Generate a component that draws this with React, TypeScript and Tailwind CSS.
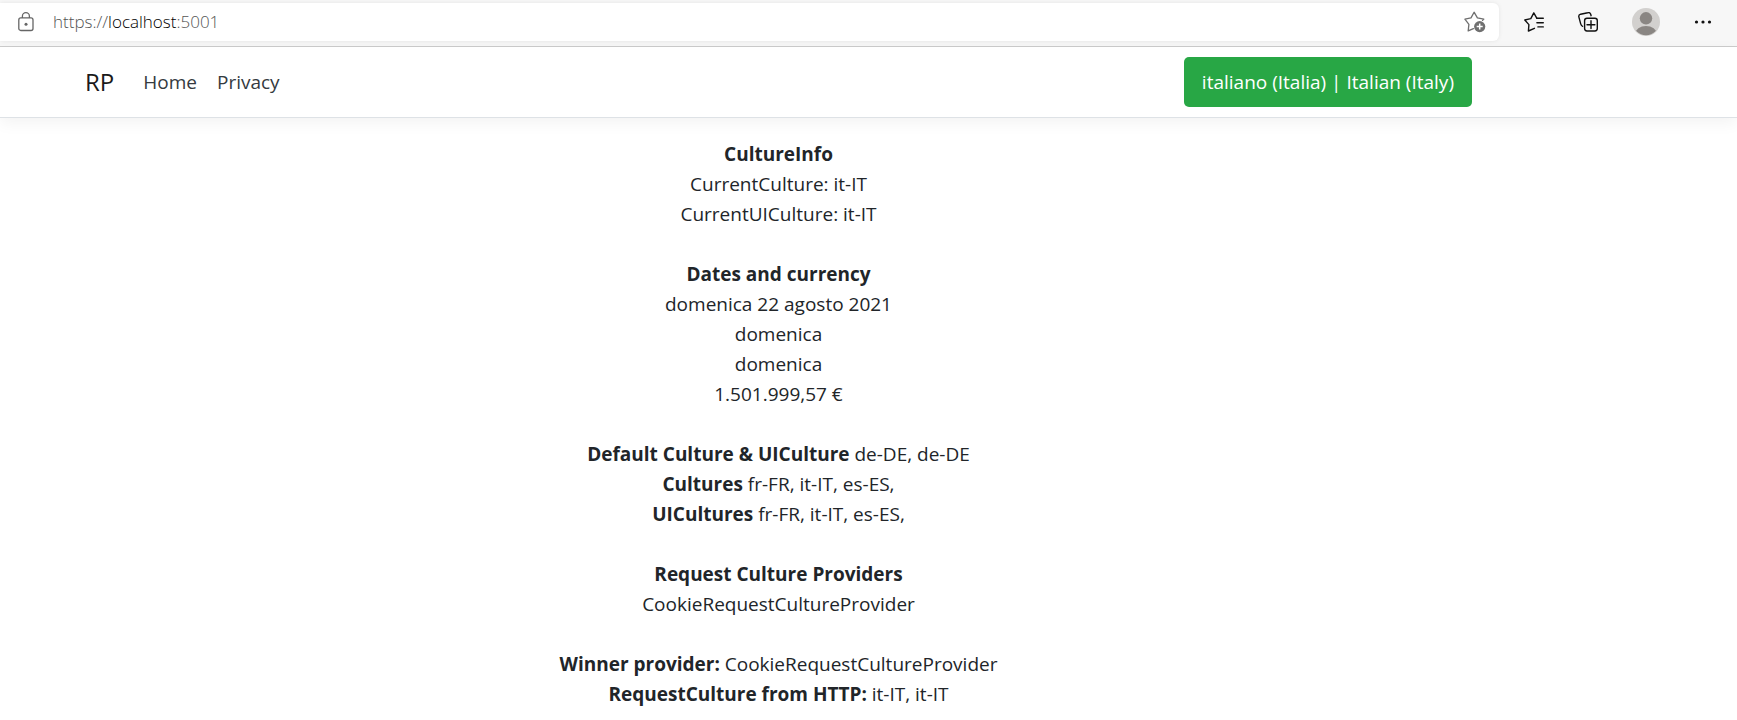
import React from "react";

function LockIcon() {
  return (
    <svg width="16" height="20" viewBox="0 0 16 20" fill="none" stroke="#666" strokeWidth="1.3" aria-hidden="true">
      <rect x="0.8" y="5.9" width="14.2" height="12.6" rx="2" />
      <path d="M4.4 5.9V4.2a3.5 3.5 0 0 1 7 0v1.7" />
      <circle cx="8" cy="12.2" r="1.5" fill="#666" stroke="none" />
    </svg>
  );
}

function AddFavoriteIcon() {
  return (
    <svg width="22" height="22" viewBox="0 0 22 22" fill="none" aria-hidden="true">
      <path
        d="M9.4 17.6 4.2 19.9 4.9 13.4 0.9 8.2 7 6.9 10.1 1.2 13.4 6.9 19.8 8.1 18.6 9.4"
        stroke="#6f6f6f"
        strokeWidth="1.3"
        strokeLinejoin="round"
        strokeLinecap="round"
      />
      <circle cx="15.7" cy="15.6" r="5.6" fill="#707070" />
      <path d="M15.7 12.6v6M12.7 15.6h6" stroke="#fff" strokeWidth="1.5" />
    </svg>
  );
}

function FavoritesIcon() {
  return (
    <svg width="20" height="20" viewBox="0 0 20 20" fill="none" stroke="#111" strokeWidth="1.4" strokeLinejoin="round" strokeLinecap="round" aria-hidden="true">
      <path d="M12.9 6.3 9.8 0.9 6.8 6.6 0.8 8 4.9 12.6 4.4 19 10.4 16.3" />
      <path d="M12.9 6.3H19.3M12.9 10.7h6.4M13.9 14.9h5.4" />
    </svg>
  );
}

function CollectionsIcon() {
  return (
    <svg width="20" height="20" viewBox="0 0 20 20" fill="none" stroke="#111" strokeWidth="1.4" strokeLinejoin="round" strokeLinecap="round" aria-hidden="true">
      <path d="M4.6 14.3C3.5 13.9 3 13 2.7 11.9L0.9 5.1c-.4-1.5.3-2.5 1.7-2.9L9.7 0.7c1.5-.4 2.5.2 3 1.6l.4 1.4" />
      <rect x="6.6" y="6.3" width="12.7" height="12.7" rx="2.4" />
      <path d="M13 8.7v7.9M9 12.7h7.9" />
    </svg>
  );
}

function AvatarIcon() {
  return (
    <svg width="28" height="28" viewBox="0 0 28 28" aria-hidden="true">
      <defs>
        <clipPath id="avatar-clip">
          <circle cx="14" cy="14" r="13.2" />
        </clipPath>
      </defs>
      <circle cx="14" cy="14" r="14" fill="#d2d0ce" />
      <circle cx="14" cy="10.3" r="6.2" fill="#8a8683" />
      <ellipse cx="14" cy="26" rx="10.8" ry="8" fill="#8a8683" clipPath="url(#avatar-clip)" />
    </svg>
  );
}

function MoreIcon() {
  return (
    <svg width="18" height="18" viewBox="0 0 18 18" fill="#111" aria-hidden="true">
      <circle cx="2.5" cy="9" r="1.6" />
      <circle cx="9" cy="9" r="1.6" />
      <circle cx="15.5" cy="9" r="1.6" />
    </svg>
  );
}

function BrowserBar() {
  return (
    <div className="flex h-[47px] items-start border-b border-[#cccccc] bg-[#f7f7f7] pt-[3px]">
      <div className="flex h-[38px] flex-1 items-center rounded-r-md bg-white pr-[13px] pl-[18px] shadow-[0_0_4px_rgba(0,0,0,0.08)]">
        <LockIcon />
        <a href="https://localhost:5001" className="ml-[19px] flex-1 text-[17px] font-light text-[#555555]">
          https://<span className="text-black">localhost</span>:5001
        </a>
        <button type="button" aria-label="Add this page to favorites">
          <AddFavoriteIcon />
        </button>
      </div>
      <div className="flex h-[38px] items-center gap-[34px] px-[25px]">
        <button type="button" aria-label="Favorites">
          <FavoritesIcon />
        </button>
        <button type="button" aria-label="Collections">
          <CollectionsIcon />
        </button>
        <button type="button" aria-label="Profile">
          <AvatarIcon />
        </button>
        <button type="button" aria-label="Settings and more">
          <MoreIcon />
        </button>
      </div>
    </div>
  );
}

function SiteHeader() {
  return (
    <header className="border-b border-[#dee2e6] shadow-[0_5px_15px_rgba(0,0,0,0.05)]">
      <nav className="ml-[66px] flex w-full max-w-[1425px] items-center px-[19px] py-2.5 text-[19px]">
        <a href="#" className="text-[24px] text-[#1a1a1a]">
          RP
        </a>
        <a href="#" className="ml-[29px] text-[#343a40]">
          Home
        </a>
        <a href="#privacy" className="ml-5 text-[#343a40]">
          Privacy
        </a>
        <button type="button" className="ml-auto h-[50px] rounded-[5px] bg-[#28a745] px-[18px] text-white">
          italiano (Italia) | Italian (Italy)
        </button>
      </nav>
    </header>
  );
}

function Heading({ children }: { children: React.ReactNode }) {
  return <strong className="font-bold">{children}</strong>;
}

export default function App() {
  return (
    <div className="min-h-screen bg-white font-['Open_Sans','Noto_Sans',sans-serif] text-[#212529]">
      <BrowserBar />
      <SiteHeader />
      <main className="ml-[66px] flex w-full max-w-[1425px] flex-col gap-[30px] px-[19px] pt-[21px] text-center text-[19px] leading-[30px]">
        <section>
          <p>
            <Heading>CultureInfo</Heading>
          </p>
          <p>CurrentCulture: it-IT</p>
          <p>CurrentUICulture: it-IT</p>
        </section>
        <section>
          <p>
            <Heading>Dates and currency</Heading>
          </p>
          <p>domenica 22 agosto 2021</p>
          <p>domenica</p>
          <p>domenica</p>
          <p>1.501.999,57 €</p>
        </section>
        <section>
          <p>
            <Heading>Default Culture &amp; UICulture</Heading> de-DE, de-DE
          </p>
          <p>
            <Heading>Cultures</Heading> fr-FR, it-IT, es-ES,
          </p>
          <p>
            <Heading>UICultures</Heading> fr-FR, it-IT, es-ES,
          </p>
        </section>
        <section>
          <p>
            <Heading>Request Culture Providers</Heading>
          </p>
          <p>CookieRequestCultureProvider</p>
        </section>
        <section>
          <p>
            <Heading>Winner provider:</Heading> CookieRequestCultureProvider
          </p>
          <p>
            <Heading>RequestCulture from HTTP:</Heading> it-IT, it-IT
          </p>
        </section>
      </main>
    </div>
  );
}
